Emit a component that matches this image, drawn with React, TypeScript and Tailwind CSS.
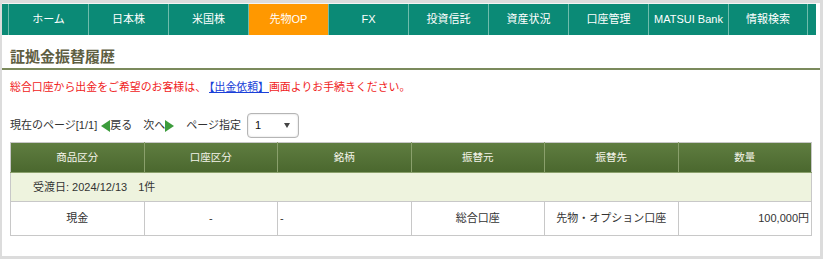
// 証拠金振替履歴 画面

const navItems = ['ホーム', '日本株', '米国株', '先物OP', 'FX', '投資信託', '資産状況', '口座管理', 'MATSUI Bank', '情報検索'];

const headers = ['商品区分', '口座区分', '銘柄', '振替元', '振替先', '数量'];

export default function App() {
  return (
    <div
      className="w-[823px] h-[259px] overflow-hidden bg-white border-[#dcdcdc] border-t-[3px] border-l-2 border-r-[3px] border-b-[3px] text-[#333]"
      style={{ fontFamily: '"Liberation Sans", "Noto Sans CJK JP", sans-serif' }}
    >
      {/* グローバルナビ */}
      <nav className="flex w-[814px] h-[32px] bg-[#0b8a76] pl-[6px] border-t border-[#f4f4f4]">
        {navItems.map((item, i) => (
          <div
            key={item}
            className={`w-[80px] flex items-center justify-center text-[11px] text-white border-l border-[#6fbcac] ${
              i === navItems.length - 1 ? 'border-r' : ''
            } ${item === '先物OP' ? 'bg-[#ff9800]' : ''}`}
          >
            {item}
          </div>
        ))}
      </nav>

      {/* タイトル */}
      <div className="h-[35px] flex items-center pl-[8px] pt-[9px] border-b-2 border-[#7b8a5c]">
        <h1 className="text-[15px] font-bold text-[#5e5e42] leading-none">証拠金振替履歴</h1>
      </div>

      <div className="pl-[8px] pr-[8px]">
        {/* お知らせ */}
        <p className="mt-[9px] text-[10.9px] leading-[16px] text-[#f02222]">
          総合口座から出金をご希望のお客様は、
          <a href="#" className="text-[#1a3fd8] underline ml-[3px]">【出金依頼】</a>
          画面よりお手続きください。
        </p>

        {/* ページ送り */}
        <div className="mt-[18px] flex items-center h-[25px] text-[11px]">
          <span>現在のページ[1/1]</span>
          <span className="ml-[4px] w-0 h-0 border-y-[6px] border-y-transparent border-r-[9px] border-r-[#3c9c3c]" />
          <span>戻る</span>
          <span className="ml-[11px]">次へ</span>
          <span className="w-0 h-0 border-y-[6px] border-y-transparent border-l-[9px] border-l-[#3c9c3c]" />
          <span className="ml-[12px]">ページ指定</span>
          <div className="ml-[6px] w-[52px] h-[25px] rounded-[4px] border border-[#b5b5b5] shadow-[inset_0_0_2px_#ccc] bg-white flex items-center justify-between pl-[7px] pr-[8px]">
            <span className="text-[11px] text-[#111]">1</span>
            <span className="w-0 h-0 border-x-[3.5px] border-x-transparent border-t-[5px] border-t-[#444]" />
          </div>
        </div>

        {/* 振替履歴テーブル */}
        <table className="mt-[4px] w-[802px] border-collapse table-fixed text-[11px]">
          <thead>
            <tr className="h-[30px] bg-gradient-to-b from-[#5f7d40] to-[#4a672e]">
              {headers.map((h) => (
                <th
                  key={h}
                  className="font-normal text-[10.5px] text-[#f4f4ea] border border-[#8aa06c] border-t-[#c8c8c8] first:border-l-[#c8c8c8] last:border-r-[#c8c8c8]"
                >
                  {h}
                </th>
              ))}
            </tr>
          </thead>
          <tbody>
            <tr className="h-[29px] bg-[#eef3de]">
              <td colSpan={6} className="border border-[#c8c8c8] pl-[22px]">
                受渡日: 2024/12/13　1件
              </td>
            </tr>
            <tr className="h-[34px]">
              <td className="border border-[#c8c8c8] text-center">現金</td>
              <td className="border border-[#c8c8c8] text-center">-</td>
              <td className="border border-[#c8c8c8] pl-[2px]">-</td>
              <td className="border border-[#c8c8c8] text-center">総合口座</td>
              <td className="border border-[#c8c8c8] text-center">先物・オプション口座</td>
              <td className="border border-[#c8c8c8] text-right pr-[2px]">100,000円</td>
            </tr>
          </tbody>
        </table>
      </div>
    </div>
  );
}
